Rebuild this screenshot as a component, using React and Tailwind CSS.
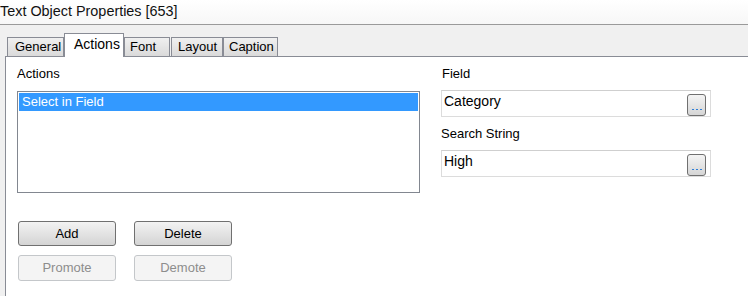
import React, { useState } from "react";

const tabs = [
  { name: "General", cls: "w-[57px] pl-[7px]" },
  { name: "Actions", cls: "w-[60px] pl-[9px]" },
  { name: "Font", cls: "w-[46px] pl-[5px]" },
  { name: "Layout", cls: "w-[52px] pl-[6px] ml-[1px]" },
  { name: "Caption", cls: "w-[55px] pl-[5px]" }
];

function DotsButton() {
  return (
    <button
      type="button"
      className="absolute right-[4px] top-[3px] w-[19px] h-[22px] rounded-[3px] border border-[#707070] bg-linear-to-b from-[#f4f4f4] to-[#d6d6d6] flex items-end justify-center pb-[5px]"
    >
      <span className="flex gap-[2px]">
        <span className="w-[2px] h-[1px] bg-[#2f7fd8]" />
        <span className="w-[2px] h-[1px] bg-[#2f7fd8]" />
        <span className="w-[2px] h-[1px] bg-[#2f7fd8]" />
      </span>
    </button>
  );
}

function FieldBox({ value }) {
  return (
    <div className="relative w-[270px] h-[27px] border border-[#dcdcdc] border-t-[#cfcfcf] bg-white pl-[2px] pt-[2px] text-[14px] leading-[17px] text-black">
      {value}
      <DotsButton />
    </div>
  );
}

function App() {
  const [active, setActive] = useState("Actions");

  return (
    <div className="w-[748px] h-[296px] overflow-hidden bg-[#f0f0f0] font-['Liberation_Sans',Arial,sans-serif] text-[13px] text-black flex flex-col">
      <div className="h-[25px] shrink-0 border-b border-[#9a9a9a] bg-linear-to-b from-[#ffffff] to-[#f7f7f7] text-[14.4px] leading-[22px] text-[#111]">
        Text Object Properties [653]
      </div>

      <div className="h-[31px] shrink-0 flex items-end pl-[7px]">
        {tabs.map((t) => {
          const isActive = t.name === active;
          return (
            <div
              key={t.name}
              onClick={() => setActive(t.name)}
              className={
                isActive
                  ? `${t.cls} relative z-10 h-[24px] -mb-[1px] bg-white border-l border-t border-r border-[#898c95] pt-[2px] leading-[17px] text-[14px]`
                  : `${t.cls} h-[19px] bg-linear-to-b from-[#f0f0f0] to-[#dadada] border-l border-t border-r border-[#898c95] leading-[18px]`
              }
            >
              {t.name}
            </div>
          );
        })}
      </div>

      <div className="flex-1 ml-[5px] border-l border-t border-[#898c95] bg-white flex pl-[11px] pt-[9px] gap-[21px]">
        <div className="w-[403px] flex flex-col">
          <div className="h-[16px] leading-[16px] mb-[9px]">Actions</div>
          <div className="h-[102px] border border-[#828790] p-[1px]">
            <div className="h-[18px] bg-[#3399ff] text-white pl-[3px] leading-[18px]">Select in Field</div>
          </div>
          <div className="mt-[28px] flex gap-[18px] pl-[1px]">
            <button className="w-[98px] h-[25px] rounded-[3px] border border-[#707070] bg-linear-to-b from-[#f3f3f3] to-[#d4d4d4] text-black text-[13px]">
              Add
            </button>
            <button className="w-[98px] h-[25px] rounded-[3px] border border-[#707070] bg-linear-to-b from-[#f3f3f3] to-[#d4d4d4] text-black text-[13px]">
              Delete
            </button>
          </div>
          <div className="mt-[9px] flex gap-[18px] pl-[1px]">
            <button disabled className="w-[98px] h-[26px] rounded-[3px] border border-[#c4c7ca] bg-[#f4f4f4] text-[#8d8d8d] text-[13px]">
              Promote
            </button>
            <button disabled className="w-[98px] h-[26px] rounded-[3px] border border-[#c4c7ca] bg-[#f4f4f4] text-[#8d8d8d] text-[13px]">
              Demote
            </button>
          </div>
        </div>

        <div className="flex flex-col">
          <div className="h-[16px] leading-[16px] mb-[8px] pl-[1px]">Field</div>
          <FieldBox value="Category" />
          <div className="h-[16px] leading-[16px] mt-[9px] mb-[8px]">Search String</div>
          <FieldBox value="High" />
        </div>
      </div>
    </div>
  );
}

export default App;
